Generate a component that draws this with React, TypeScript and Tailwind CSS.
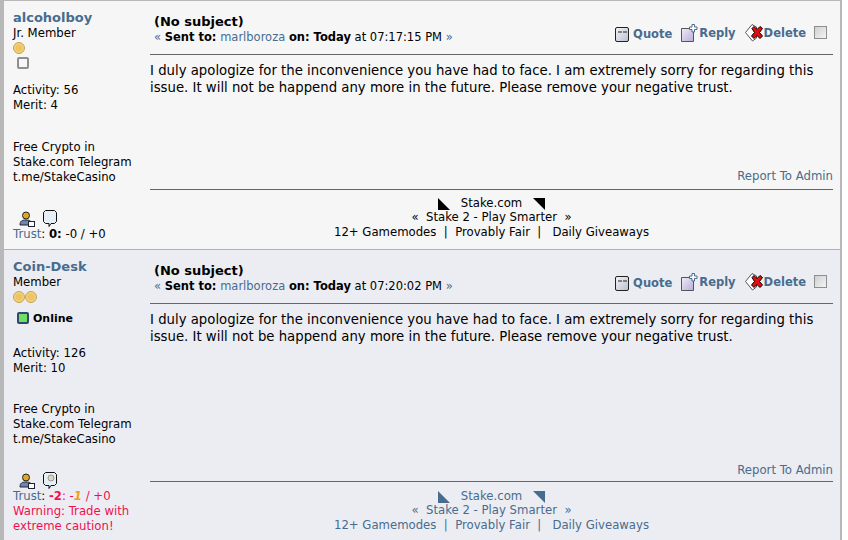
import React from 'react';

const font = { fontFamily: '"DejaVu Sans", Verdana, sans-serif' };

const Coin = () => (
  <svg width="12" height="12" viewBox="0 0 12 12" className="block">
    <circle cx="6" cy="6" r="5.5" fill="#f0d080" stroke="#c8a458" />
    <circle cx="6" cy="6" r="3.2" fill="#eec45c" />
  </svg>
);

const QuoteIcon = () => (
  <svg width="14" height="15" viewBox="0 0 14 15" className="block">
    <defs>
      <linearGradient id="q" x1="0" y1="0" x2="1" y2="1">
        <stop offset="0" stopColor="#f4f4f6" />
        <stop offset="1" stopColor="#b8c0d0" />
      </linearGradient>
    </defs>
    <rect x="0.5" y="0.5" width="13" height="14" rx="1.5" fill="url(#q)" stroke="#222" />
    <path d="M4 4v2M6 4v2M9 4v2M11 4v2" stroke="#222" strokeWidth="1" />
  </svg>
);

const ReplyIcon = () => (
  <svg width="17" height="18" viewBox="0 0 17 18" className="block">
    <defs>
      <linearGradient id="r" x1="0" y1="0" x2="1" y2="1">
        <stop offset="0" stopColor="#f0ecf8" />
        <stop offset="1" stopColor="#b8acd8" />
      </linearGradient>
    </defs>
    <path d="M0.500 4.500h10l2 2v11h-12z" fill="url(#r)" stroke="#555" />
    <path d="M11 0.500h2.500v2.500H16v2.500h-2.500V8H11V5.500H8.500V3H11z" fill="#fff" stroke="#4a6a90" />
  </svg>
);

const DeleteIcon = () => (
  <svg width="19" height="18" viewBox="0 0 19 18" className="block">
    <path d="M7 0.500L0.500 8.500l7 8.500 4-3V3z" fill="#fff" stroke="#555" />
    <path d="M7 4.500l2-2 3 3 3-3 2.500 2-3 4 3 3.500-2.500 2.500-3-3-3 3-2.500-2.500 3-3.500z" fill="#e01010" stroke="#000" />
  </svg>
);

const Check = () => (
  <span className="block w-[13px] h-[13px] border border-[#8e8e8e] bg-gradient-to-br from-[#d0d0d0] to-[#f4f4f4]" />
);

const ProfileIcon = () => (
  <svg width="16" height="16" viewBox="0 0 16 16" className="block">
    <circle cx="7" cy="4.500" r="3.500" fill="#e0a820" stroke="#222" />
    <path d="M1 14c0-4 2-5 6-5s6 1 6 5z" fill="#6d88b0" stroke="#223" />
    <rect x="9.500" y="10.500" width="6" height="5" fill="#fff" stroke="#223" />
  </svg>
);

const BubbleIcon = ({ filled }: { filled: boolean }) => (
  <svg width="14" height="17" viewBox="0 0 14 17" className="block">
    <path d="M2.500 0.500h9l2 2v9l-2 2H8l-2 3v-3H2.500l-2-2v-9z" fill="#e6eef6" stroke="#111" />
    {filled && <circle cx="8" cy="6" r="3" fill="#d8d8c8" stroke="#998" />}
  </svg>
);

const Corner = ({ flip, color }: { flip?: boolean; color: string }) => (
  <svg width="12" height="12" viewBox="0 0 12 12" className="block">
    <path d={flip ? 'M0 0h12v12z' : 'M0 0l12 12H0z'} fill={color} />
  </svg>
);

type PostProps = {
  name: string;
  rank: string;
  coins: number;
  online?: boolean;
  activity: number;
  merit: number;
  time: string;
  warned?: boolean;
  blue?: boolean;
};

const Post = ({ name, rank, coins, online, activity, merit, time, warned, blue }: PostProps) => {
  const sigColor = blue ? 'text-[#476c8e]' : 'text-black';
  const cornerColor = blue ? '#476c8e' : '#000';
  return (
    <div className={`flex pl-[9px] pr-[7px] ${blue ? 'bg-[#ecedf3] h-[291px]' : 'bg-[#f6f6f6] h-[248px]'}`}>
      <div className="w-[137px] shrink-0 pt-[9px] text-[11.7px] leading-[15px] text-black">
        <div className="text-[13px] leading-[16px] font-bold text-[#476c8e]">{name}</div>
        <div>{rank}</div>
        <div className="flex h-[13px] mt-[1px]">
          {Array.from({ length: coins }).map((_, i) => <Coin key={i} />)}
        </div>
        <div className={`flex items-center h-[18px] pl-[4px] gap-[4px] ${online ? 'mt-[5px]' : '-mt-[1px]'}`}>
          {online ? (
            <>
              <span className="block w-[12px] h-[12px] border-2 border-[#2f4a70] rounded-[2px] bg-[#6fe060]" />
              <span className="font-bold text-[11px]">Online</span>
            </>
          ) : (
            <span className="block w-[12px] h-[12px] border-2 border-[#8e8e8e] rounded-[2px] bg-[#f6f6f6]" />
          )}
        </div>
        <div className={online ? 'mt-[19px]' : 'mt-[11px]'}>Activity: {activity}</div>
        <div>Merit: {merit}</div>
        <div className={online ? 'mt-[26px]' : 'mt-[27px]'}>Free Crypto in</div>
        <div>Stake.com Telegram</div>
        <div>t.me/StakeCasino</div>
        <div className="flex items-end gap-[8px] pl-[6px] mt-[24px] h-[18px]">
          <ProfileIcon />
          <BubbleIcon filled={!!warned} />
        </div>
        <div>
          <span className="text-[#476c8e]">Trust</span>
          {warned ? (
            <span>: <span className="text-[#f01050]"><b>-2</b>: -<b className="italic text-[#f0a010]">1</b> / +0</span></span>
          ) : (
            <span>: <b>0:</b> -0 / +0</span>
          )}
        </div>
        {warned && <div className="text-[#f01050]">Warning: Trade with<br />extreme caution!</div>}
      </div>

      <div className="flex-1 flex flex-col">
        <div className="flex justify-between h-[40px] pt-[13px] border-b border-[#666] box-content">
          <div className="pl-[4px]">
            <div className="text-[13px] leading-[16px] font-bold text-black">(No subject)</div>
            <div className="text-[11.5px] leading-[15px] text-black whitespace-nowrap">
              <span className="text-[#476c8e]">«</span> <b>Sent to:</b>{' '}
              <span className="text-[#476c8e]">marlboroza</span> <b>on: Today</b> at {time}{' '}
              <span className="text-[#476c8e]">»</span>
            </div>
          </div>
          <div className="flex items-start mt-[9px] mr-[6px] text-[11.5px] leading-[18px] font-bold text-[#476c8e]">
            <span className="flex items-center mt-[2px]"><QuoteIcon /><span className="ml-[4px]">Quote</span></span>
            <span className="flex items-center ml-[9px] mt-[1px]"><ReplyIcon /><span className="ml-[1px]">Reply</span></span>
            <span className="flex items-center ml-[9px] mt-[1px]"><DeleteIcon /><span>Delete</span></span>
            <span className="ml-[8px] mt-[3px]"><Check /></span>
          </div>
        </div>
        <p className="mt-[7px] text-[13.28px] leading-[17px] text-black">
          I duly apologize for the inconvenience you have had to face. I am extremely sorry for regarding this
          <br />
          issue. It will not be happend any more in the future. Please remove your negative trust.
        </p>
        <div className={`flex-1 flex items-end justify-end text-[11.7px] leading-[15px] text-[#476c8e] ${blue ? 'pb-[3px]' : 'pb-[5px]'}`}>
          Report To Admin
        </div>
        <div className={`border-t border-[#666] h-[60px] text-[11.7px] leading-[15px] text-center ${sigColor} ${blue ? 'pt-[7px]' : 'pt-[6px]'}`}>
          <div className="flex justify-center items-center gap-[11px] h-[15px]">
            <Corner color={cornerColor} />
            <span>Stake.com</span>
            <Corner flip color={cornerColor} />
          </div>
          <div className="whitespace-pre -mt-[1px]">«  Stake 2 - Play Smarter  »</div>
          <div className="whitespace-pre">12+ Gamemodes  |  Provably Fair  |   Daily Giveaways</div>
        </div>
      </div>
    </div>
  );
};

export default function App() {
  return (
    <div className="w-[848px] h-[540px] overflow-hidden bg-white" style={font}>
      <div className="w-[842px] border-l-4 border-r-2 border-t border-[#b8b8b8] box-border">
        <Post
          name="alcoholboy"
          rank="Jr. Member"
          coins={1}
          activity={56}
          merit={4}
          time="07:17:15 PM"
        />
        <div className="h-px bg-[#b0b0b0]" />
        <Post
          name="Coin-Desk"
          rank="Member"
          coins={2}
          online
          activity={126}
          merit={10}
          time="07:20:02 PM"
          warned
          blue
        />
      </div>
    </div>
  );
}
